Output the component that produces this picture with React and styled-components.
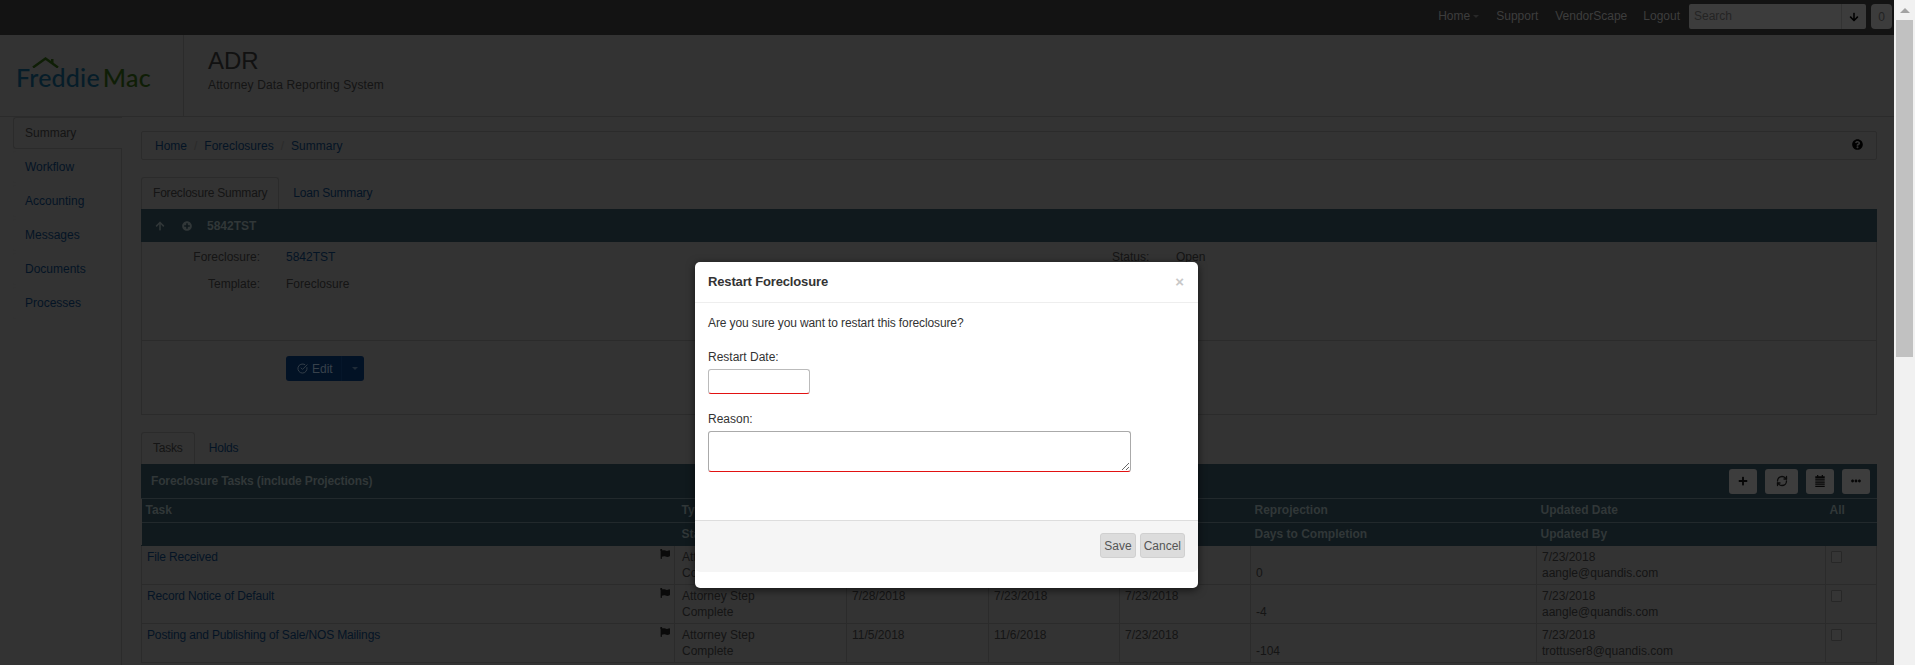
import React from 'react'
import styled, { createGlobalStyle } from 'styled-components'
import { FaPlus, FaFlag, FaPlusCircle, FaQuestionCircle, FaArrowUp, FaArrowDown, FaEllipsisH } from 'react-icons/fa'
import { LuCircleCheckBig, LuRefreshCw } from 'react-icons/lu'

const colors = {
  page: '#666666',
  line: '#575757',
  link: '#09294a',
  text: '#2a2a2a',
  head: '#20323a',
  headText: '#626e70',
  navText: '#7a7a7a',
}

const GlobalStyle = createGlobalStyle`
  html, body {
    margin: 0;
    height: 665px;
    overflow: hidden;
    background: ${colors.page};
  }

  body, input, textarea, button {
    font-family: 'Liberation Sans', Arial, sans-serif;
    font-size: 12px;
  }

  * {
    box-sizing: border-box;
  }
`

const Shell = styled.div`
  position: relative;
  display: flex;
  width: 1915px;
  height: 665px;
  overflow: hidden;
`

const Page = styled.div`
  width: 1894px;
  height: 665px;
  overflow: hidden;
  background: ${colors.page};
  color: ${colors.text};
`

const Scrollbar = styled.div`
  width: 21px;
  background: #f1f1f1;
`

const ScrollUp = styled.div`
  height: 20px;
  display: flex;
  align-items: center;
  justify-content: center;

  &:after {
    content: '';
    border-left: 5px solid transparent;
    border-right: 5px solid transparent;
    border-bottom: 5px solid #a3a3a3;
  }
`

const ScrollThumb = styled.div`
  height: 337px;
  margin: 0 2px;
  background: #c1c1c1;
`

const TopBar = styled.div`
  height: 35px;
  background: #262626;
  display: flex;
  justify-content: flex-end;
  align-items: flex-start;
  padding: 4px 2px 0 0;
`

const TopLink = styled.a`
  color: ${colors.navText};
  line-height: 25px;
  margin-right: ${(props) => props.$gap}px;
  display: flex;
  align-items: center;
`

const Caret = styled.span`
  margin-left: 3px;
  border-left: 3px solid transparent;
  border-right: 3px solid transparent;
  border-top: 3px solid ${(props) => props.$color};
`

const SearchBox = styled.div`
  width: 177px;
  height: 25px;
  display: flex;
  background: #787878;
  border-radius: 2px;
  margin-right: 5px;
`

const SearchText = styled.span`
  flex: 1;
  padding-left: 5px;
  line-height: 25px;
  color: #484848;
`

const SearchButton = styled.span`
  width: 25px;
  display: flex;
  align-items: center;
  justify-content: center;
  border-left: 1px solid #666;
  color: #000;
  font-size: 10px;
`

const Badge = styled.span`
  width: 21px;
  height: 25px;
  border-radius: 4px;
  background: #787878;
  color: #444;
  display: flex;
  align-items: center;
  justify-content: center;
`

const Header = styled.header`
  height: 82px;
  display: flex;
  border-bottom: 1px solid ${colors.line};
`

const LogoCell = styled.div`
  width: 184px;
  padding: 22px 0 0 16px;
  border-right: 1px solid ${colors.line};
`

const Roof = styled.svg`
  display: block;
  margin-left: 16px;
`

const LogoText = styled.div`
  font-family: Lato, 'Open Sans', sans-serif;
  font-size: 25px;
  font-weight: 500;
  line-height: 19px;
  letter-spacing: 0.2px;
  white-space: nowrap;
`

const LogoPart = styled.span`
  color: ${(props) => props.$color};
  margin-right: ${(props) => props.$gap || 0}px;
`

const AppTitle = styled.div`
  padding: 13px 0 0 24px;
`

const AppName = styled.h1`
  margin: 0;
  font-size: 24px;
  font-weight: 400;
  line-height: 26px;
  color: #222;
`

const AppSub = styled.div`
  margin-top: 3px;
  line-height: 16px;
  letter-spacing: 0.13px;
  color: ${colors.text};
`

const Body = styled.div`
  display: flex;
  height: 548px;
`

const Sidebar = styled.nav`
  width: 122px;
  flex: none;
  padding-left: 13px;
`

const SideList = styled.div`
  height: 100%;
  border-right: 1px solid ${colors.line};
`

const SideItem = styled.a`
  display: block;
  height: 32px;
  margin: ${(props) => (props.$active ? '0 -1px 2px 0' : '0 0 2px')};
  padding-left: ${(props) => (props.$active ? 11 : 12)}px;
  line-height: ${(props) => (props.$active ? '30px' : '32px')};
  color: ${(props) => (props.$active ? colors.text : colors.link)};
  background: ${colors.page};
  border: ${(props) => (props.$active ? `1px solid ${colors.line}` : 'none')};
  border-right: none;
  border-radius: 3px 0 0 3px;
`

const Content = styled.main`
  flex: 1;
  min-width: 0;
  padding: 14px 17px 0 19px;
`

const Breadcrumb = styled.div`
  height: 29px;
  display: flex;
  align-items: center;
  padding: 0 13px 0 13px;
  border: 1px solid ${colors.line};
  border-radius: 2px;
  color: ${colors.link};
`

const CrumbSep = styled.span`
  margin: 0 7px;
  color: #555;
`

const HelpIcon = styled.span`
  margin-left: auto;
  margin-top: -3px;
  display: flex;
  color: #000;
  font-size: 11px;
`

const Tabs = styled.div`
  display: flex;
  gap: 2px;
  height: 32px;
  margin-top: ${(props) => props.$top}px;
`

const Tab = styled.a`
  padding: 0 11px;
  line-height: 30px;
  letter-spacing: -0.2px;
  color: ${(props) => (props.$active ? colors.text : colors.link)};
  border: 1px solid ${(props) => (props.$active ? colors.line : 'transparent')};
  border-bottom: none;
  border-radius: 3px 3px 0 0;
`

const Panel = styled.section`
  height: 206px;
  border: 1px solid ${colors.line};
  border-top: none;
`

const PanelHead = styled.div`
  height: 33px;
  margin: 0 -1px;
  display: flex;
  align-items: center;
  padding-left: 14px;
  background: ${colors.head};
  color: ${colors.headText};
  font-weight: 700;
  font-size: 12px;
`

const HeadIcon = styled.span`
  display: flex;
  width: ${(props) => props.$width}px;
  font-size: 10px;
`

const PanelBody = styled.div`
  height: 99px;
  padding-top: 6px;
  display: flex;
  border-bottom: 1px solid ${colors.line};
`

const FieldColumn = styled.div`
  width: ${(props) => props.$width}px;
`

const Field = styled.div`
  display: flex;
  height: 27px;
  line-height: 18px;
`

const FieldLabel = styled.span`
  width: ${(props) => props.$width}px;
  margin-right: ${(props) => props.$gap}px;
  text-align: ${(props) => props.$align};
`

const FieldValue = styled.span`
  color: ${(props) => (props.$link ? colors.link : colors.text)};
`

const PanelFoot = styled.div`
  padding: 15px 0 0 144px;
`

const EditButton = styled.button`
  display: flex;
  align-items: stretch;
  width: 78px;
  height: 25px;
  padding: 0;
  border: none;
  border-radius: 3px;
  background: #04244a;
  color: #6f8296;
`

const EditMain = styled.span`
  width: 56px;
  display: flex;
  align-items: center;
  padding-left: 11px;
  border-right: 1px solid #0a2c54;
`

const EditIcon = styled.span`
  display: flex;
  margin-right: 4px;
  font-size: 11px;
`

const EditCaret = styled.span`
  flex: 1;
  display: flex;
  align-items: center;
  justify-content: center;
`

const TableTitle = styled.div`
  height: 35px;
  display: flex;
  align-items: center;
  padding: 0 7px 0 10px;
  background: ${colors.head};
  color: ${colors.headText};
  font-weight: 700;
  letter-spacing: -0.15px;
  border-bottom: 1px solid #445359;
`

const TitleTools = styled.div`
  margin-left: auto;
  display: flex;
  gap: 8px;
`

const ToolButton = styled.button`
  width: ${(props) => props.$width}px;
  height: 25px;
  padding: 0;
  display: flex;
  align-items: center;
  justify-content: center;
  border: none;
  border-radius: 3px;
  background: #7a7a7a;
  color: ${(props) => props.$color || '#0c0c0c'};
  font-size: 10px;
`

const Grid = styled.table`
  width: 100%;
  table-layout: fixed;
  border-collapse: collapse;
`

const HeadCell = styled.th`
  height: 23px;
  padding: 0 4px 0 ${(props) => (props.$first ? 7 : 4)}px;
  background: ${colors.head};
  color: ${colors.headText};
  text-align: left;
  font-weight: 700;
  font-size: 12px;
  border-bottom: 1px solid ${(props) => (props.$last ? colors.head : '#445359')};
`

const Cell = styled.td`
  height: 39px;
  padding: 3px 4px 0 ${(props) => (props.$first ? 7 : 5)}px;
  vertical-align: top;
  line-height: 16px;
  border: 1px solid ${colors.line};
`

const TaskRow = styled.div`
  display: flex;
  justify-content: space-between;
`

const TaskLink = styled.a`
  color: ${colors.link};
  letter-spacing: -0.15px;
`

const FlagIcon = styled.span`
  display: flex;
  color: #141414;
  font-size: 10px;
`

const Line = styled.div`
  min-height: 16px;
`

const CheckBox = styled.input`
  display: block;
  width: 11px;
  height: 12px;
  margin: 2px 0 0;
  appearance: none;
  border: 1px solid #4e4e4e;
  border-radius: 1px;
  background: #6a6a6a;
`

const Backdrop = styled.div`
  position: absolute;
  left: 0;
  top: 0;
  width: 1894px;
  height: 665px;
  background: rgba(0, 0, 0, 0.5);
  display: flex;
  justify-content: center;
  align-items: flex-start;
  padding: 262px 1px 0 0;
`

const Modal = styled.div`
  width: 503px;
  height: 326px;
  background: #fff;
  border-radius: 5px;
  box-shadow: 0 2px 8px rgba(0, 0, 0, 0.6);
  color: #333;
`

const ModalHeader = styled.div`
  height: 41px;
  display: flex;
  align-items: center;
  justify-content: space-between;
  padding: 0 14px 2px 13px;
  border-bottom: 1px solid #eee;
`

const ModalTitle = styled.h4`
  margin: 0;
  font-size: 13px;
  font-weight: 700;
  letter-spacing: -0.15px;
  color: #333;
`

const CloseMark = styled.span`
  font-size: 15px;
  font-weight: 700;
  color: #c8c8c8;
  line-height: 1;
`

const ModalBody = styled.div`
  height: 217px;
  padding: 12px 13px 0;
`

const Prompt = styled.p`
  margin: 0 0 17px;
  line-height: 17px;
  letter-spacing: -0.12px;
`

const FormLabel = styled.label`
  display: block;
  line-height: 17px;
  margin-bottom: 3px;
`

const DateInput = styled.input`
  display: block;
  width: 102px;
  height: 25px;
  margin-bottom: 17px;
  border: 1px solid #bbb;
  border-bottom-color: #e21212;
  border-radius: 3px;
  background: #fff;
  outline: none;
`

const ReasonInput = styled.textarea`
  display: block;
  width: 423px;
  height: 41px;
  border: 1px solid #aaa;
  border-bottom-color: #e21212;
  border-radius: 3px;
  outline: none;
`

const ModalFooter = styled.div`
  height: 52px;
  display: flex;
  justify-content: flex-end;
  align-items: flex-start;
  gap: 4px;
  padding: 12px 13px 0 0;
  background: #f5f5f5;
  border-top: 1px solid #ddd;
  border-radius: 0 0 5px 5px;
`

const FooterButton = styled.button`
  height: 25px;
  padding: 0 3px;
  border: 1px solid #d0d0d0;
  border-radius: 3px;
  background: #dcdcdc;
  color: #555;
`

const CalendarGlyph = () => (
  <svg width="10" height="12" viewBox="0 0 11 14" fill="currentColor">
    <path d="M2 0h1.5v2H2zM7.5 0H9v2H7.5z" />
    <path d="M0 1.5h11v2.5H0zM0 5h11v1.5H0zM0 7.5h11V9H0zM0 10h11v1.5H0zM0 12.5h11V14H0z" />
  </svg>
)

const crumbs = ['Home', 'Foreclosures', 'Summary']
const sideItems = ['Summary', 'Workflow', 'Accounting', 'Messages', 'Documents', 'Processes']
const columns = [533, 172, 142, 131, 131, 286, 289, 51]

const tasks = [
  { name: 'File Received', dates: ['', '', ''], days: '0', updated: '7/23/2018', by: 'aangle@quandis.com' },
  { name: 'Record Notice of Default', dates: ['7/28/2018', '7/23/2018', '7/23/2018'], days: '-4', updated: '7/23/2018', by: 'aangle@quandis.com' },
  { name: 'Posting and Publishing of Sale/NOS Mailings', dates: ['11/5/2018', '11/6/2018', '7/23/2018'], days: '-104', updated: '7/23/2018', by: 'trottuser8@quandis.com' },
]

export default function App() {
  return (
    <Shell>
      <GlobalStyle />
      <Page>
        <TopBar>
          <TopLink $gap={17}>Home<Caret $color="#505050" /></TopLink>
          <TopLink $gap={17}>Support</TopLink>
          <TopLink $gap={16}>VendorScape</TopLink>
          <TopLink $gap={9}>Logout</TopLink>
          <SearchBox>
            <SearchText>Search</SearchText>
            <SearchButton><FaArrowDown /></SearchButton>
          </SearchBox>
          <Badge>0</Badge>
        </TopBar>

        <Header>
          <LogoCell>
            <Roof width="27" height="11" viewBox="0 0 27 11">
              <path d="M1 10.5 L13.5 1.5 L26 10.5" fill="none" stroke="#1e3d0c" strokeWidth="2.4" />
              <path d="M19 2 h2.5 v4 h-2.5z" fill="#1e3d0c" />
            </Roof>
            <LogoText>
              <LogoPart $color="#0c3a52" $gap={3}>Freddie</LogoPart>
              <LogoPart $color="#1e3d0c">Mac</LogoPart>
            </LogoText>
          </LogoCell>
          <AppTitle>
            <AppName>ADR</AppName>
            <AppSub>Attorney Data Reporting System</AppSub>
          </AppTitle>
        </Header>

        <Body>
          <Sidebar>
            <SideList>
              {sideItems.map((item, i) => (
                <SideItem key={item} $active={i === 0}>{item}</SideItem>
              ))}
            </SideList>
          </Sidebar>

          <Content>
            <Breadcrumb>
              {crumbs.map((crumb, i) => (
                <React.Fragment key={crumb}>
                  {i > 0 && <CrumbSep>/</CrumbSep>}
                  <span>{crumb}</span>
                </React.Fragment>
              ))}
              <HelpIcon><FaQuestionCircle /></HelpIcon>
            </Breadcrumb>

            <Tabs $top={17}>
              <Tab $active>Foreclosure Summary</Tab>
              <Tab>Loan Summary</Tab>
            </Tabs>

            <Panel>
              <PanelHead>
                <HeadIcon $width={27}><FaArrowUp /></HeadIcon>
                <HeadIcon $width={25}><FaPlusCircle /></HeadIcon>
                5842TST
              </PanelHead>
              <PanelBody>
                <FieldColumn $width={970}>
                  <Field>
                    <FieldLabel $width={118} $gap={26} $align="right">Foreclosure:</FieldLabel>
                    <FieldValue $link>5842TST</FieldValue>
                  </Field>
                  <Field>
                    <FieldLabel $width={118} $gap={26} $align="right">Template:</FieldLabel>
                    <FieldValue>Foreclosure</FieldValue>
                  </Field>
                </FieldColumn>
                <FieldColumn $width={200}>
                  <Field>
                    <FieldLabel $width={64} $gap={0} $align="left">Status:</FieldLabel>
                    <FieldValue>Open</FieldValue>
                  </Field>
                </FieldColumn>
              </PanelBody>
              <PanelFoot>
                <EditButton>
                  <EditMain>
                    <EditIcon><LuCircleCheckBig /></EditIcon>
                    Edit
                  </EditMain>
                  <EditCaret><Caret $color="#3f566e" /></EditCaret>
                </EditButton>
              </PanelFoot>
            </Panel>

            <Tabs $top={17}>
              <Tab $active>Tasks</Tab>
              <Tab>Holds</Tab>
            </Tabs>

            <TableTitle>
              Foreclosure Tasks (include Projections)
              <TitleTools>
                <ToolButton $width={28}><FaPlus /></ToolButton>
                <ToolButton $width={33} $color="#161616"><LuRefreshCw size={12} strokeWidth={2.6} /></ToolButton>
                <ToolButton $width={28}><CalendarGlyph /></ToolButton>
                <ToolButton $width={28}><FaEllipsisH /></ToolButton>
              </TitleTools>
            </TableTitle>

            <Grid>
              <colgroup>
                {columns.map((width, i) => <col key={i} width={width} />)}
              </colgroup>
              <thead>
                <tr>
                  <HeadCell>Task</HeadCell>
                  <HeadCell $first>Type</HeadCell>
                  <HeadCell />
                  <HeadCell />
                  <HeadCell />
                  <HeadCell>Reprojection</HeadCell>
                  <HeadCell>Updated Date</HeadCell>
                  <HeadCell>All</HeadCell>
                </tr>
                <tr>
                  <HeadCell $last />
                  <HeadCell $last $first>Status</HeadCell>
                  <HeadCell $last />
                  <HeadCell $last />
                  <HeadCell $last />
                  <HeadCell $last>Days to Completion</HeadCell>
                  <HeadCell $last>Updated By</HeadCell>
                  <HeadCell $last />
                </tr>
              </thead>
              <tbody>
                {tasks.map((task) => (
                  <tr key={task.name}>
                    <Cell>
                      <TaskRow>
                        <TaskLink>{task.name}</TaskLink>
                        <FlagIcon><FaFlag /></FlagIcon>
                      </TaskRow>
                    </Cell>
                    <Cell $first>
                      <Line>Attorney Step</Line>
                      <Line>Complete</Line>
                    </Cell>
                    {task.dates.map((date, i) => (
                      <Cell key={i}><Line>{date}</Line></Cell>
                    ))}
                    <Cell>
                      <Line />
                      <Line>{task.days}</Line>
                    </Cell>
                    <Cell>
                      <Line>{task.updated}</Line>
                      <Line>{task.by}</Line>
                    </Cell>
                    <Cell><CheckBox type="checkbox" /></Cell>
                  </tr>
                ))}
              </tbody>
            </Grid>
          </Content>
        </Body>
      </Page>

      <Scrollbar>
        <ScrollUp />
        <ScrollThumb />
      </Scrollbar>

      <Backdrop>
        <Modal>
          <ModalHeader>
            <ModalTitle>Restart Foreclosure</ModalTitle>
            <CloseMark>×</CloseMark>
          </ModalHeader>
          <ModalBody>
            <Prompt>Are you sure you want to restart this foreclosure?</Prompt>
            <FormLabel>Restart Date:</FormLabel>
            <DateInput type="text" />
            <FormLabel>Reason:</FormLabel>
            <ReasonInput />
          </ModalBody>
          <ModalFooter>
            <FooterButton>Save</FooterButton>
            <FooterButton>Cancel</FooterButton>
          </ModalFooter>
        </Modal>
      </Backdrop>
    </Shell>
  )
}
